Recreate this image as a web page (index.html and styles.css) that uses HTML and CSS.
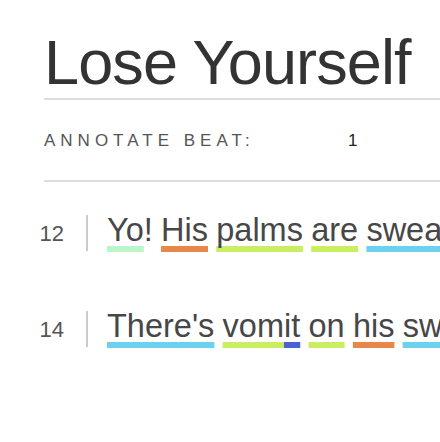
FILE: index.html
```html
<!DOCTYPE html>
<html lang="en">
  <head>
    <meta charset="UTF-8">
    <meta name="viewport" content="width=device-width, initial-scale=1.0">
    <title>Lose Yourself</title>
    <link rel="stylesheet" href="styles.css">
  </head>
  <body>
    <div class="page">
      <header class="song-head">
        <h1 class="song-title">Lose Yourself</h1>
        <div class="beat-row">
          <span class="beat-label">ANNOTATE BEAT:</span>
          <span class="beat-value">1</span>
        </div>
      </header>
      <section class="lyrics">
        <div class="lyric-line">
          <span class="line-num">12</span>
          <p class="line-text"><span class="syl mint">Yo</span>! <span class="syl orange">His</span> <span class="syl lime">palms</span> <span class="syl lime">are</span> <span class="syl cyan">sweaty</span>, <span class="syl orange">knees</span> <span class="syl lime">weak</span>, <span class="syl cyan">arms</span> <span class="syl lime">are</span> <span class="syl blue">heavy</span></p>
        </div>
        <div class="lyric-line">
          <span class="line-num">14</span>
          <p class="line-text"><span class="syl cyan">There's</span> <span class="syl lime">vom</span><span class="syl blue">it</span> <span class="syl lime">on</span> <span class="syl orange">his</span> <span class="syl cyan">sweater</span> <span class="syl lime">already</span>, <span class="syl orange">mom's</span> <span class="syl mint">spaghetti</span></p>
        </div>
      </section>
    </div>
  </body>
</html>
```

FILE: styles.css
```css
* {
  margin: 0;
  padding: 0;
  box-sizing: border-box;
}
body {
  font-family: "Liberation Sans", Arial, sans-serif;
  background-color: #fff;
  color: #444;
}
.page {
  height: 442px;
  overflow: hidden;
}
.song-head {
  margin-left: 44px;
}
.song-title {
  padding-top: 27px;
  font-size: 63px;
  font-weight: 400;
  line-height: 71px;
  letter-spacing: -0.9px;
  color: #333;
  white-space: nowrap;
  border-bottom: 2px solid #ddd;
}
.beat-row {
  display: flex;
  padding: 31px 0 29px;
  font-size: 17px;
  line-height: 20px;
  border-bottom: 2px solid #ddd;
}
.beat-label {
  width: 304px;
  letter-spacing: 5px;
  color: #555;
}
.beat-value {
  color: #222;
}
.lyrics {
  padding-top: 33px;
}
.lyric-line {
  display: flex;
  align-items: baseline;
  white-space: nowrap;
}
.lyric-line + .lyric-line {
  margin-top: 60px;
}
.line-num {
  width: 64px;
  flex-shrink: 0;
  text-align: right;
  font-size: 22px;
  color: #555;
}
.line-text {
  margin-left: 22px;
  padding: 0 0 6px 19px;
  border-left: 2px solid #ccc;
  font-size: 32.5px;
  line-height: 30px;
  word-spacing: -0.8px;
  color: #474747;
}
.syl {
  text-decoration: underline;
  text-decoration-thickness: 6px;
  text-underline-offset: 5px;
  text-decoration-skip-ink: none;
}
.mint { text-decoration-color: #b9f7c7; }
.orange { text-decoration-color: #e8874a; }
.lime { text-decoration-color: #c9ee62; }
.cyan { text-decoration-color: #6cd1ef; }
.blue { text-decoration-color: #4a63d2; }
```
